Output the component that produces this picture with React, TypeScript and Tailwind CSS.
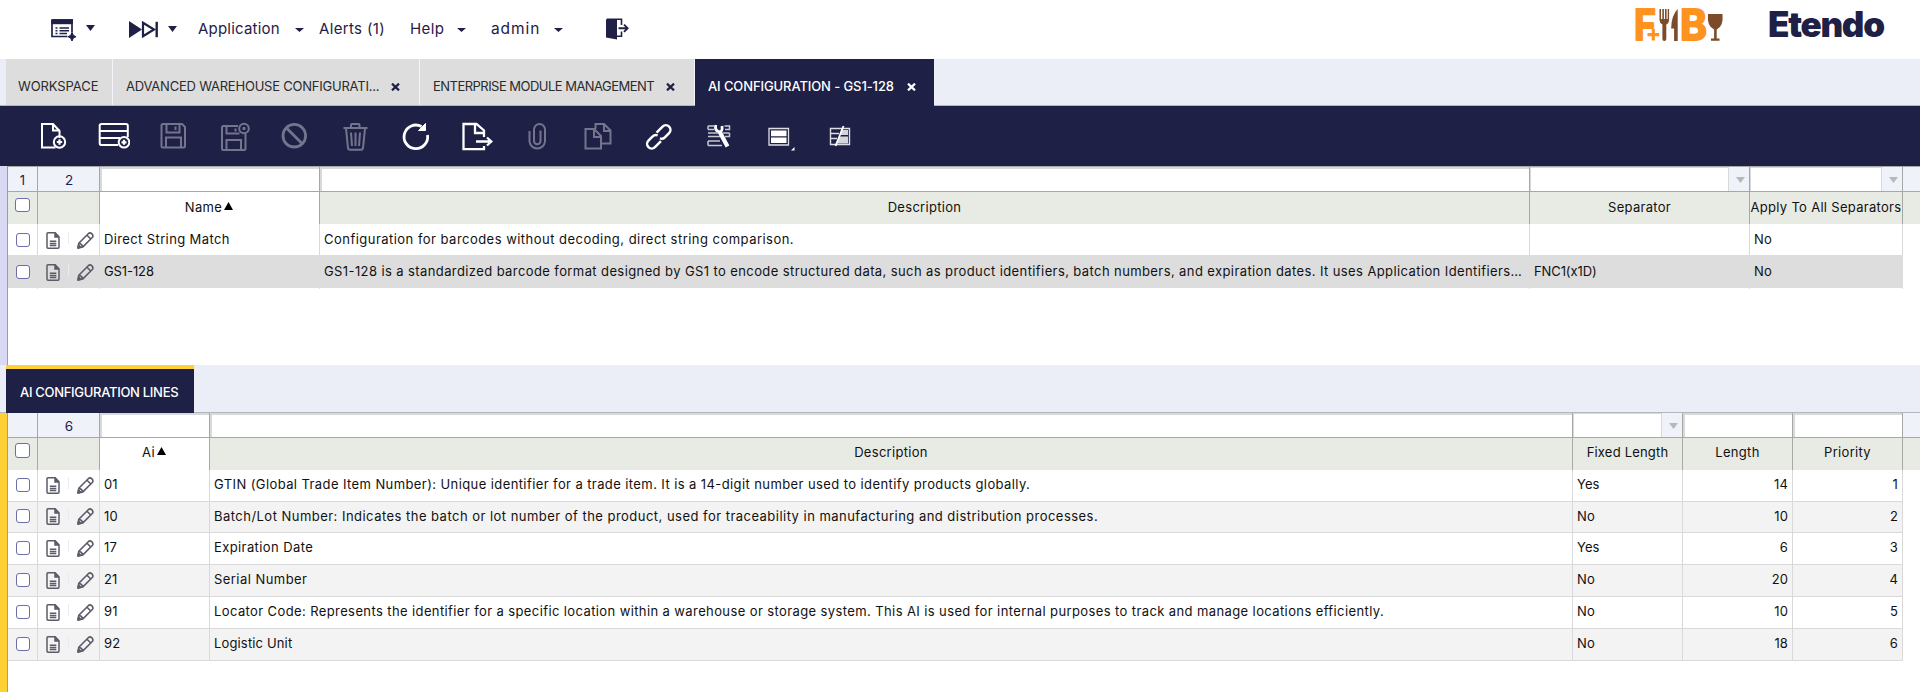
import React from 'react';
import clsx from 'clsx';

type Sort = { title: string; width: string; kind: 'text' | 'select'; sorted?: boolean; align?: string; track?: string };
type Cell = { text: string; track?: string };

const caret = 'M0 0H9L4.5 5.5Z';

function Caret({ className, color = '#1f2046', w = 9, h = 5 }: { className?: string; color?: string; w?: number; h?: number }) {
  return (
    <svg className={clsx('shrink-0', className)} width={w} height={h} viewBox="0 0 9 5.5" preserveAspectRatio="none">
      <path d={caret} fill={color} />
    </svg>
  );
}

function Cross({ color, className }: { color: string; className?: string }) {
  return (
    <svg className={clsx('shrink-0', className)} width="9" height="8" viewBox="0 0 9 8">
      <path d="M1 0.6 8 7.4M8 0.6 1 7.4" stroke={color} strokeWidth="2.2" />
    </svg>
  );
}

function TopBar() {
  return (
    <header className="flex h-[59px] shrink-0 items-start bg-white text-[15px] text-[#1f2046]">
      <svg className="ml-[51px] mt-[19px] shrink-0" width="25" height="22" viewBox="0 0 25 22">
        <path d="M1 1H21V13.5M16.5 17.5H1V1" fill="none" stroke="#1f2046" strokeWidth="1.7" />
        <path d="M0.2 0.2H22V5.2H0.2Z" fill="#1f2046" />
        <path d="M4.5 9H6.5M8.5 9H18M4.5 11.7H6.5M8.5 11.7H18M4.5 14.4H6.5M8.5 14.4H16" stroke="#1f2046" strokeWidth="1.5" />
        <path d="M21 13.5 22.4 16.4 25 17.7 22.4 19 21 22 19.6 19 17 17.7 19.6 16.4Z" fill="#1f2046" stroke="#1f2046" />
      </svg>
      <Caret className="ml-[10px] mt-[25px]" h={6} w={9} />
      <svg className="ml-[34px] mt-[21px] shrink-0" width="29" height="17" viewBox="0 0 29 17">
        <path d="M0 0 13 8.5 0 17Z" fill="#1f2046" />
        <path d="M14 1.7 25 8.500 14 15.300Z" fill="none" stroke="#1f2046" strokeWidth="2.200" />
        <path d="M27.700 .8V16.200" stroke="#1f2046" strokeWidth="2.400" />
      </svg>
      <Caret className="ml-[10px] mt-[26px]" h={6} w={9} />
      <span className="ml-[21px] mt-[18px] w-[97px] whitespace-nowrap leading-[22px] tracking-[0.2px]">Application</span>
      <Caret className="mt-[28px]" h={4} />
      <span className="ml-[15px] mt-[18px] w-[91px] whitespace-nowrap leading-[22px] tracking-[0.35px]">Alerts (1)</span>
      <span className="mt-[18px] w-[47px] whitespace-nowrap leading-[22px] tracking-[0.4px]">Help</span>
      <Caret className="mt-[28px]" h={4} />
      <span className="ml-[25px] mt-[18px] w-[63px] whitespace-nowrap text-[15.5px] leading-[22px] tracking-[0.9px]">admin</span>
      <Caret className="mt-[28px]" h={4} />
      <svg className="ml-[43px] mt-[18px] shrink-0" width="23" height="22" viewBox="0 0 23 22">
        <path d="M0 1.5 1 0.4H11V21.6L0 19.4Z" fill="#1f2046" />
        <path d="M11 1.2H15.5V7M15.5 13.5V18.2H11" fill="none" stroke="#1f2046" strokeWidth="1.6" />
        <path d="M12.5 10.2H21M18 6.6 21.6 10.2 18 13.8" fill="none" stroke="#1f2046" strokeWidth="1.9" />
      </svg>

      <svg className="ml-auto mt-[7px] shrink-0 overflow-visible" width="88" height="35" viewBox="0 0 88 35">
        <g fontFamily="Inter, sans-serif" fontWeight="700" fontSize="42" fill="#ff9320" stroke="#ff9320" strokeWidth="2" strokeLinejoin="round">
          <text x="-1" y="32.500" textLength="22" lengthAdjust="spacingAndGlyphs">F</text>
          <text x="45" y="32.500" textLength="27" lengthAdjust="spacingAndGlyphs">B</text>
        </g>
        <path d="M18.300 22V34M12.500 27.700H24" stroke="#fff" strokeWidth="6" />
        <path d="M18.300 22V33.500M12.500 27.700H24.200" stroke="#ff9320" strokeWidth="3.200" />
        <g fill="#7b4b2a">
          <path d="M24.500 2H26V12H27.300V2H28.900V12H30V2H31.600V12H32.700V2H34.100V13Q34.100 16 31.300 17.500V32Q31.300 34 29.300 34T27.400 32V17.500Q24.500 16 24.500 13Z" />
          <path d="M42.700 2V34H39.100V21.500H36.100Q36.500 8 42.700 2Z" />
          <path d="M73 7H87.500Q88.700 19.500 81.700 22.500V31.500H84.500V33.800H76V31.500H79.100V22.500Q71.800 19.500 73 7Z" />
        </g>
      </svg>
      <span className="ml-[45px] mt-[2px] w-[152px] whitespace-nowrap text-[35px] font-black leading-[44px] tracking-[-1.3px]">Etendo</span>
    </header>
  );
}

function TabStrip() {
  return (
    <nav className="flex h-[47px] shrink-0 border-b border-[#b4b6bd] bg-[#ebeef7] pl-[6px] text-[13px] text-[#2b2b2b]">
      <div className="flex w-[107px] items-center border-r border-[#f2f4fa] bg-[#ddd] pl-[12px] pt-[9px]">
        <span className="whitespace-nowrap tracking-[-0.1px]">WORKSPACE</span>
      </div>
      <div className="flex w-[307px] items-center border-r border-[#f2f4fa] bg-[#ddd] pl-[13px] pt-[9px]">
        <span className="w-[265px] whitespace-nowrap tracking-[-0.22px]">ADVANCED WAREHOUSE CONFIGURATI...</span>
        <Cross color="#1f2046" />
      </div>
      <div className="flex w-[275px] items-center border-r border-[#f2f4fa] bg-[#ddd] pl-[13px] pt-[9px]">
        <span className="w-[233px] whitespace-nowrap tracking-[-0.53px]">ENTERPRISE MODULE MANAGEMENT</span>
        <Cross color="#1f2046" />
      </div>
      <div className="-mb-px flex w-[239px] items-center bg-[#1f2046] pb-px pl-[13px] pt-[9px] font-medium text-white">
        <span className="w-[199px] whitespace-nowrap tracking-[-0.1px]">AI CONFIGURATION - GS1-128</span>
        <Cross color="#fff" />
      </div>
    </nav>
  );
}

const on = '#ffffff';
const off = '#74758d';

const tools: { name: string; color: string; art: React.ReactNode }[] = [
  { name: 'new', color: on, art: <><path d="M18.500 27.500H5V4H16L22.500 11V18" /><path d="M16 4V10.500H22.500" /><circle cx="22.500" cy="22" r="5.700" /><path d="M22.500 19.300V24.700M19.800 22H25.200" strokeWidth="2.200" /></> },
  { name: 'new-row', color: on, art: <><path d="M20 25H3.500Q1.700 25 1.700 23.200V5.800Q1.700 4 3.500 4H28Q29.800 4 29.800 5.800V17M1.700 11H29.800M1.700 18H22" /><circle cx="26" cy="22.300" r="5.300" /><path d="M26 19.800V24.800M23.500 22.300H28.500" strokeWidth="2.200" /></> },
  { name: 'save', color: off, art: <><path d="M5 4H24L27 7V26Q27 27.500 25.500 27.500H5Q3.500 27.500 3.500 26V5.500Q3.500 4 5 4ZM8.500 4V12.500H21.500V4M17.500 6.500V10M8 27.500V17.500H23V27.500" /></> },
  { name: 'save-close', color: off, art: <><path d="M19 6H4.500Q3 6 3 7.500V28.500Q3 30 4.500 30H25Q26.500 30 26.500 28.500V14M7.500 6V13.500H20.500M16.500 8.500V11.500M7.500 30V20H22V30" /><circle cx="25" cy="8.500" r="4.800" /><path d="M23.500 8.500H26.500M25 7V10" /></> },
  { name: 'undo', color: off, art: <><circle cx="15.300" cy="15.700" r="11.300" strokeWidth="2.800" /><path d="M7.500 8 23 23.500" strokeWidth="2.800" /></> },
  { name: 'delete', color: off, art: <><path d="M3.500 8H27.500M11 8V5Q11 4 12 4H18.500Q19.500 4 19.500 5V8M6 8.500 8 28Q8.200 29.700 10 29.700H21Q22.700 29.700 23 28L25 8.500M11 12.500 12 26M15.500 12.500V26M20 12.500 19 26" /></> },
  { name: 'refresh', color: on, art: <><path d="M21.500 6.500A11.800 11.800 0 1 0 27.500 15" strokeWidth="2.800" /><path d="M25.500 3.500V10.500H18.500Z" fill="#fff" strokeWidth="1" /></> },
  { name: 'export', color: on, art: <><path d="M23 17V10.500L15.500 4H2.500V29.200H23V26M14 4V13H23" strokeWidth="2.300" /><path d="M15 21.500H30M26 17.500 30.300 21.500 26 25.500" strokeWidth="2.300" /></> },
  { name: 'attach', color: off, art: <path d="M8.500 11V21.500A7.800 7.800 0 0 0 24 21.500V9.500A5.500 5.500 0 0 0 13 9.500V21A3.200 3.200 0 0 0 19.500 21V10.500" /> },
  { name: 'copy', color: off, art: <path d="M13.500 9V4H22L28.500 10.500V23.500H19.500M22 4V11H28.500M3.500 9H12L19 16V28.500H3.500ZM12 9V17H19" /> },
  { name: 'link', color: on, art: <g transform="translate(.7 .3) rotate(-45 16 16.500)"><path d="M17.500 12H26A4.600 4.600 0 0 1 26 21.200H20A4.600 4.600 0 0 1 15.700 18.500M14.500 21.200H6A4.600 4.600 0 0 1 6 12H12A4.600 4.600 0 0 1 16.300 14.700" strokeWidth="2.500" /></g> },
  { name: 'process', color: on, art: <><path d="M5 6H11M5 9.500H11M5 6V9.500M21.500 6H26.500V9.500H22M5 13H15M5 16.500H17M26.500 13V16.500H22M5 21H17M5 25.500H19M5 21V25.500M20 13H26.500" strokeWidth="1.500" opacity=".75" /><path d="M16.500 11.500 24.500 26.500" strokeWidth="4.200" /><path d="M12.800 5Q11.500 10.500 15.700 11.500T19 6" strokeWidth="2.800" /></> },
  { name: 'form-view', color: on, art: <><path d="M6 8.500H25.500V25H6Z" strokeWidth="1.300" opacity=".85" /><path d="M8 10.500H23.500V16.200H8ZM8 17.500H23.500V23H8Z" fill="#fff" stroke="none" /><path d="M31.500 27V30.500H28Z" fill="#fff" stroke="none" /></> },
  { name: 'grid-edit', color: on, art: <><path d="M6.500 8.500H25.500V24.500H6.500ZM6.500 13.500H15M6.500 18.500H13" strokeWidth="1.400" opacity=".85" /><path d="M17.500 10H24V15H15.500ZM15 16.500H24V23.500H12.500Z" fill="#d4d4dc" stroke="none" /><path d="M19.500 6 11.500 26" strokeWidth="1.800" /></> },
];

function Toolbar() {
  return (
    <div className="flex h-[60px] shrink-0 items-start bg-[#1f2046] pl-[23px] pt-[14px]">
      {tools.map((t) => (
        <button key={t.name} aria-label={t.name} className="flex w-[60.5px] shrink-0 justify-center">
          <svg width="32" height="32" viewBox="0 0 32 32" fill="none" stroke={t.color} strokeWidth="2">
            {t.art}
          </svg>
        </button>
      ))}
    </div>
  );
}

function Checkbox({ className }: { className: string }) {
  return <span className={clsx('block w-[14px] shrink-0 rounded-[3px] border border-[#6b6ea8] bg-white', className)} />;
}

function RowIcons() {
  return (
    <>
      <svg className="ml-[8px] shrink-0" width="14" height="17" viewBox="0 0 14 17" fill="none" stroke="#5b5c69" strokeWidth="1.500">
        <path d="M2 .8H9.200L13 4.800V15Q13 16.200 12 16.200H2Q1 16.200 1 15V1.800Q1 .8 2 .8Z" />
        <path d="M9 .8V5H13" fill="#5b5c69" />
        <path d="M3.800 9.300H10.300M3.800 11.400H10.300M3.800 13.500H10.300" strokeWidth="1.500" />
      </svg>
      <span className="mb-[5px] ml-[8px] h-[12px] w-px shrink-0 bg-[#e8ebf3]" />
      <svg className="ml-[8px] shrink-0" width="17" height="17" viewBox="0 0 17 17" fill="none" stroke="#5b5c69" strokeWidth="1.600" strokeLinejoin="round">
        <path d="M1 16 1.800 11.200 11.500 1.500Q13.200 .2 14.900 1.900T15.500 5.300L5.900 14.900ZM10 3.300 13.800 7" />
        <path d="M1.800 11.200Q4.800 11.500 5.900 14.900" />
        <path d="M1 16 1.600 13.200 3.800 15.300Z" fill="#5b5c69" />
      </svg>
    </>
  );
}

function Grid({
  counts, columns, rows, accent, variant,
}: {
  counts: [string, string];
  columns: Sort[];
  rows: Cell[][];
  accent: string;
  variant: 'parent' | 'lines';
}) {
  const parent = variant === 'parent';
  return (
    <section className={clsx('flex shrink-0', parent ? 'h-[199px]' : 'h-[279px]')}>
      <div className={clsx('w-[8px] shrink-0 border-r border-[#9b9da6]', accent)} />
      <div className="flex min-w-0 grow flex-col bg-white text-[13px] text-[#111]">
        <div className={clsx('flex shrink-0 border-b border-[#a5a8a5] bg-[#eff2f9] text-[#1f2046]', parent ? 'h-[26px] border-t' : 'h-[25px]')}>
          <div className="flex w-[30px] shrink-0 items-center justify-center border-r border-[#a5a8a5] pt-[3px]">{counts[0]}</div>
          <div className="flex w-[62px] shrink-0 items-center justify-center border-r border-[#a5a8a5] pl-px pt-[3px] text-[13.500px]">{counts[1]}</div>
          {columns.map((c) => (
            <div key={c.title} className={clsx('flex shrink-0 border-r border-[#a5a8a5]', c.width)}>
              {c.kind === 'text' ? (
                <div className="grow border-l-2 border-t-2 border-[#d9d9d9] bg-white" />
              ) : (
                <>
                  <div className="grow border-l border-r border-t border-[#d9d9d9] bg-white" />
                  <div className="flex w-[20px] items-center justify-center pl-[2px] pt-px">
                    <Caret color="#b8b8b8" h={6} />
                  </div>
                </>
              )}
            </div>
          ))}
        </div>

        <div className="flex h-[32px] shrink-0 bg-[#e8ebe4]">
          <div className="flex w-[30px] shrink-0 border-r border-[#a5a8a5] pl-[7px] pt-[6px]">
            <Checkbox className={parent ? 'h-[14px] w-[15px]' : '-mt-px h-[15px] w-[15px]'} />
          </div>
          <div className="w-[62px] shrink-0 border-r border-[#a5a8a5]" />
          {columns.map((c) => (
            <div
              key={c.title}
              className={clsx(
                'flex shrink-0 items-center justify-center whitespace-nowrap border-r border-[#a5a8a5]',
                c.width,
                c.sorted && 'bg-white pr-px',
                !parent && 'pb-[2px]',
              )}
            >
              <span className={c.track ?? 'tracking-[0.3px]'}>{c.title}</span>
              {c.sorted && (
                <svg className="mb-[5px] ml-[2px]" width="9" height="8" viewBox="0 0 9 8"><path d="M4.500 0 9 8H0Z" fill="#000" /></svg>
              )}
            </div>
          ))}
        </div>

        {rows.map((row, i) => {
          const selected = parent && i === 1;
          const line = selected ? 'border-[#ddd]' : 'border-[#d9d9d9]';
          return (
            <div
              key={row[0].text}
              className={clsx(
                'flex w-[1895px] shrink-0',
                parent && !selected && 'h-[31px] bg-white',
                selected && 'h-[33px] bg-[#ddd]',
                !parent && 'border-b border-[#d9d9d9] pb-px',
                !parent && (i === 1 ? 'h-[31px]' : 'h-[32px]'),
                !parent && i % 2 === 1 && 'bg-[#f3f3f3]',
              )}
            >
              <div className={clsx('-mb-px flex w-[30px] shrink-0 items-center border-r pl-[8px]', !parent && 'pb-[2px]', line)}>
                <Checkbox className="h-[14px]" />
              </div>
              <div className={clsx('-mb-px flex w-[62px] shrink-0 items-center border-r', !parent && 'pb-px', line)}>
                <RowIcons />
              </div>
              {row.map((cell, k) => (
                <div
                  key={columns[k].title}
                  className={clsx('-mb-px flex shrink-0 items-center whitespace-nowrap border-r px-[4px]', !parent && 'pb-px', line, columns[k].width, columns[k].align)}
                >
                  <span className={cell.track ?? 'tracking-[0.1px]'}>{cell.text}</span>
                </div>
              ))}
            </div>
          );
        })}
      </div>
    </section>
  );
}

const configColumns: Sort[] = [
  { title: 'Name', width: 'w-[220px]', kind: 'text', sorted: true },
  { title: 'Description', width: 'w-[1210px]', kind: 'text' },
  { title: 'Separator', width: 'w-[220px]', kind: 'select' },
  { title: 'Apply To All Separators', width: 'w-[153px]', kind: 'select' },
];

const configRows: Cell[][] = [
  [
    { text: 'Direct String Match', track: 'tracking-[0.38px]' },
    { text: 'Configuration for barcodes without decoding, direct string comparison.', track: 'tracking-[0.47px]' },
    { text: '' },
    { text: 'No' },
  ],
  [
    { text: 'GS1-128', track: 'tracking-[-0.1px]' },
    {
      text: 'GS1-128 is a standardized barcode format designed by GS1 to encode structured data, such as product identifiers, batch numbers, and expiration dates. It uses Application Identifiers…',
      track: 'tracking-[0.4px]',
    },
    { text: 'FNC1(x1D)', track: 'tracking-[-0.1px]' },
    { text: 'No' },
  ],
];

const lineColumns: Sort[] = [
  { title: 'Ai', width: 'w-[110px]', kind: 'text', sorted: true },
  { title: 'Description', width: 'w-[1363px]', kind: 'text' },
  { title: 'Fixed Length', width: 'w-[110px]', kind: 'select', track: 'tracking-[0.2px]' },
  { title: 'Length', width: 'w-[110px]', kind: 'text', align: 'justify-end' },
  { title: 'Priority', width: 'w-[110px]', kind: 'text', align: 'justify-end' },
];

const lineRows: Cell[][] = [
  [{ text: '01' }, { text: 'GTIN (Global Trade Item Number): Unique identifier for a trade item. It is a 14-digit number used to identify products globally.', track: 'tracking-[0.405px]' }, { text: 'Yes' }, { text: '14' }, { text: '1' }],
  [{ text: '10' }, { text: 'Batch/Lot Number: Indicates the batch or lot number of the product, used for traceability in manufacturing and distribution processes.', track: 'tracking-[0.47px]' }, { text: 'No' }, { text: '10' }, { text: '2' }],
  [{ text: '17' }, { text: 'Expiration Date', track: 'tracking-[0.4px]' }, { text: 'Yes' }, { text: '6' }, { text: '3' }],
  [{ text: '21' }, { text: 'Serial Number', track: 'tracking-[0.45px]' }, { text: 'No' }, { text: '20' }, { text: '4' }],
  [{ text: '91' }, { text: 'Locator Code: Represents the identifier for a specific location within a warehouse or storage system. This AI is used for internal purposes to track and manage locations efficiently.', track: 'tracking-[0.392px]' }, { text: 'No' }, { text: '10' }, { text: '5' }],
  [{ text: '92' }, { text: 'Logistic Unit', track: 'tracking-[0.15px]' }, { text: 'No' }, { text: '18' }, { text: '6' }],
];

export default function App() {
  return (
    <div className="flex h-[692px] w-[1920px] flex-col overflow-hidden bg-white font-['Inter',sans-serif]">
      <TopBar />
      <TabStrip />
      <Toolbar />
      <Grid variant="parent" counts={['1', '2']} columns={configColumns} rows={configRows} accent="bg-[#d9d9f3]" />
      <div className="flex h-[48px] shrink-0 border-b border-[#b4b6bd] bg-[#ebeef7] pl-[6px]">
        <div className="-mb-px flex w-[188px] items-center border-t-4 border-[#fdd035] bg-[#1f2046] pl-[14px] pt-[3px] text-[13px] font-medium text-white">
          <span className="whitespace-nowrap tracking-[-0.3px]">AI CONFIGURATION LINES</span>
        </div>
      </div>
      <Grid variant="lines" counts={['', '6']} columns={lineColumns} rows={lineRows} accent="bg-[#fdd035]" />
    </div>
  );
}
